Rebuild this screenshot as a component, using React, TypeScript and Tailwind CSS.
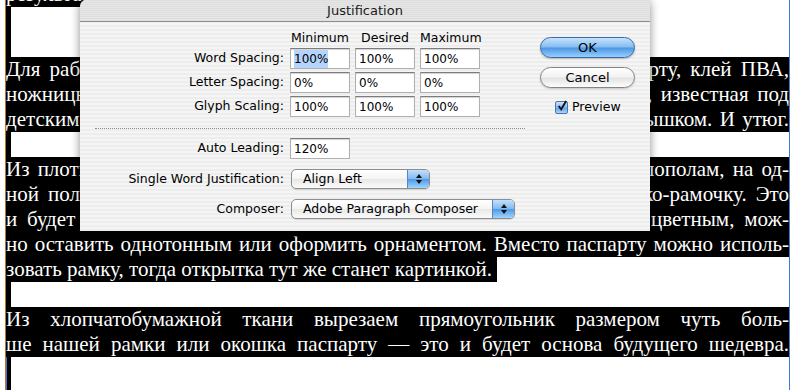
import React from "react";

const para1 = [
  "Для работы нам понадобятся: плотный картон или же бумага, паспарту, клей ПВА,",
  "ножницы, острый нож, хлопчатобумажная ткань, нитки, иголки, вата, известная под",
  "детским названием синтепон, и немного клея с тонкой кисточкой-пёрышком. И утюг.",
];

const para2 = [
  "Из плотного картона вырезаем прямоугольник, и сгибаем его ровно пополам, на од-",
  "ной половинке картона вырезаем острым ножиком аккуратное окошко-рамочку. Это",
  "и будет основа открытки. Паспарту может быть белым, серым или цветным, мож-",
  "но оставить однотонным или оформить орнаментом. Вместо паспарту можно исполь-",
];

const para3 = [
  "Из хлопчатобумажной ткани вырезаем прямоугольник размером чуть боль-",
  "ше нашей рамки или окошка паспарту — это и будет основа будущего шедевра.",
];

function FullLine({ text }: { text: string }) {
  return (
    <div className="h-[25px] leading-[25px] bg-black text-white text-justify [text-align-last:justify] whitespace-nowrap overflow-hidden">
      {text}
    </div>
  );
}

function ShortLine({ text }: { text: string }) {
  return (
    <div className="h-[25px] leading-[25px]">
      <span className="inline-block h-[25px] bg-black text-white whitespace-pre">{text}</span>
    </div>
  );
}

function EmptyLine({ caret }: { caret?: boolean }) {
  return (
    <div className="h-[25px] flex">
      <div className={"h-full w-[5px] bg-black " + (caret ? "border-l border-[#3b74d4]" : "")} />
    </div>
  );
}

function Field({ value, selected }: { value: string; selected?: boolean }) {
  return (
    <div className="h-[21px] w-[60px] bg-white border border-[#b0b0b0] border-t-[#7c7c7c] shadow-[inset_0_1px_1px_rgba(0,0,0,0.18)] flex items-center pl-[3px] text-[12px] text-black">
      <span className={selected ? "bg-[#b4d4fc]" : ""}>{value}</span>
    </div>
  );
}

function Arrows() {
  return (
    <svg width="8" height="12" viewBox="0 0 8 12">
      <path d="M4 1 L7 5 L1 5 Z" fill="#111" />
      <path d="M4 11 L7 7 L1 7 Z" fill="#111" />
    </svg>
  );
}

function Popup({ label, className }: { label: string; className: string }) {
  return (
    <div
      className={
        "h-[20px] rounded-[5px] border border-[#8d8d8d] bg-[linear-gradient(#ffffff,#f4f4f4_50%,#e8e8e8_52%,#fbfbfb)] shadow-[0_1px_1px_rgba(0,0,0,0.12)] flex items-center overflow-hidden " +
        className
      }
    >
      <span className="flex-1 pl-[11px] text-[12.5px] text-black">{label}</span>
      <div className="h-full w-[22px] border-l border-[#5b86bd] bg-[linear-gradient(#c3e0fc,#7fb9f0_50%,#4f9ae6_52%,#a0d4ff)] flex items-center justify-center">
        <Arrows />
      </div>
    </div>
  );
}

function Row({ label, values, selectFirst }: { label: string; values: string[]; selectFirst?: boolean }) {
  return (
    <div className="flex items-center h-[21px]">
      <div className="w-[204px] mr-[6px] text-right">{label}</div>
      <div className="flex gap-[5px]">
        {values.map((v, i) => (
          <Field key={i} value={v} selected={selectFirst && i === 0} />
        ))}
      </div>
    </div>
  );
}

function Dialog() {
  return (
    <div className="absolute left-[80px] top-0 w-[570px] h-[231px] rounded-t-[6px] overflow-hidden shadow-[0_0_10px_rgba(0,0,0,0.45)] font-['DejaVu_Sans',sans-serif] text-[12.5px] text-black">
      <div className="h-[22px] border-b border-[#8e8e8e] bg-[repeating-linear-gradient(0deg,#dedede_0px,#dedede_1px,#e6e6e6_1px,#e6e6e6_2px)] flex items-center justify-center text-[13px] text-[#1a1a1a]">
        Justification
      </div>
      <div className="h-[209px] flex bg-[repeating-linear-gradient(0deg,#ededed_0px,#ededed_2px,#f5f5f5_2px,#f5f5f5_4px)]">
        <div className="w-[460px] flex flex-col">
          <div className="mt-[8px] h-[16px] flex items-center">
            <div className="w-[210px]" />
            <div className="flex gap-[5px]">
              <div className="w-[60px] text-center">Minimum</div>
              <div className="w-[60px] text-center">Desired</div>
              <div className="w-[60px] text-center">Maximum</div>
            </div>
          </div>
          <div className="mt-[2px] flex flex-col gap-[3px]">
            <Row label="Word Spacing:" values={["100%", "100%", "100%"]} selectFirst />
            <Row label="Letter Spacing:" values={["0%", "0%", "0%"]} />
            <Row label="Glyph Scaling:" values={["100%", "100%", "100%"]} />
          </div>
          <div className="mt-[11px] ml-[15px] w-[430px] border-t border-dotted border-[#8a8a8a]" />
          <div className="mt-[9px] flex items-center h-[21px]">
            <div className="w-[204px] mr-[6px] text-right">Auto Leading:</div>
            <Field value="120%" />
          </div>
          <div className="mt-[10px] flex items-center h-[20px]">
            <div className="w-[204px] mr-[7px] text-right">Single Word Justification:</div>
            <Popup label="Align Left" className="w-[139px]" />
          </div>
          <div className="mt-[10px] flex items-center h-[20px]">
            <div className="w-[204px] mr-[7px] text-right">Composer:</div>
            <Popup label="Adobe Paragraph Composer" className="w-[224px]" />
          </div>
        </div>
        <div className="w-[95px] pt-[15px] flex flex-col">
          <div className="h-[21px] rounded-full border border-[#3c6aa6] bg-[linear-gradient(#c6e2fc,#84bcf0_48%,#4b96e4_52%,#97ceff)] shadow-[0_1px_2px_rgba(0,0,0,0.25)] flex items-center justify-center text-[13px]">
            OK
          </div>
          <div className="mt-[9px] h-[21px] rounded-full border border-[#858585] bg-[linear-gradient(#ffffff,#f2f2f2_48%,#e2e2e2_52%,#fdfdfd)] shadow-[0_1px_2px_rgba(0,0,0,0.2)] flex items-center justify-center text-[13px]">
            Cancel
          </div>
          <div className="mt-[12px] ml-[15px] flex items-center gap-[4px] h-[14px]">
            <div className="w-[13px] h-[13px] rounded-[2px] border border-[#4d76ad] bg-[linear-gradient(#c9e4fd,#7db8ef_50%,#5aa1e8_52%,#a6d6ff)] flex items-center justify-center">
              <svg width="12" height="12" viewBox="0 0 12 12" className="-mt-[2px] ml-[1px]">
                <path d="M2 6 L5 10 L11 0" stroke="#111" strokeWidth="2.2" fill="none" />
              </svg>
            </div>
            <span>Preview</span>
          </div>
        </div>
      </div>
    </div>
  );
}

export default function App() {
  return (
    <div className="relative w-[806px] h-[390px] overflow-hidden bg-white">
      <div className="absolute left-[5px] top-0 bottom-0 w-px bg-[#b8772c]" />
      <div className="absolute left-[789px] top-0 bottom-0 w-px bg-[#3b7bd8]" />
      <div className="ml-[6px] w-[783px] -mt-[18px] font-['Liberation_Serif',serif] text-[21px]">
        <ShortLine text="результат превзойдёт ожидания. " />
        <EmptyLine />
        <EmptyLine />
        {para1.map((t, i) => (
          <FullLine key={i} text={t} />
        ))}
        <EmptyLine />
        {para2.map((t, i) => (
          <FullLine key={i} text={t} />
        ))}
        <ShortLine text="зовать рамку, тогда открытка тут же станет картинкой. " />
        <EmptyLine />
        {para3.map((t, i) => (
          <FullLine key={i} text={t} />
        ))}
        <EmptyLine caret />
        <EmptyLine caret />
      </div>
      <Dialog />
    </div>
  );
}
